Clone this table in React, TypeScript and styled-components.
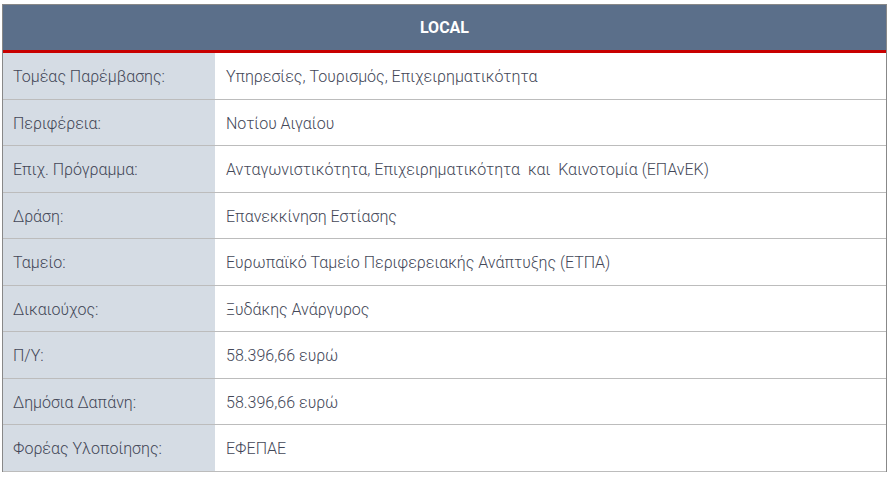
import React from 'react';
import styled, {createGlobalStyle} from "styled-components";

type RowType = {
    label: string;
    value: string;
}

const rows: RowType[] = [
    {label: "Τομέας Παρέμβασης:", value: "Υπηρεσίες, Τουρισμός, Επιχειρηματικότητα"},
    {label: "Περιφέρεια:", value: "Νοτίου Αιγαίου"},
    {label: "Επιχ. Πρόγραμμα:", value: "Ανταγωνιστικότητα, Επιχειρηματικότητα  και  Καινοτομία (ΕΠΑνΕΚ)"},
    {label: "Δράση:", value: "Επανεκκίνηση Εστίασης"},
    {label: "Ταμείο:", value: "Ευρωπαϊκό Ταμείο Περιφερειακής Ανάπτυξης (ΕΤΠΑ)"},
    {label: "Δικαιούχος:", value: "Ξυδάκης Ανάργυρος"},
    {label: "Π/Υ:", value: "58.396,66 ευρώ"},
    {label: "Δημόσια Δαπάνη:", value: "58.396,66 ευρώ"},
    {label: "Φορέας Υλοποίησης:", value: "ΕΦΕΠΑΕ"},
];

const GlobalStyle = createGlobalStyle`
  body {
    margin: 0;
    background: #fff;
    font-family: Roboto, "Liberation Sans", sans-serif;
  }
`

export default function App() {
    return (
        <>
            <GlobalStyle/>
            <Wrapper>
                <Table>
                    <colgroup>
                        <LabelCol/>
                        <col/>
                    </colgroup>
                    <thead>
                    <tr>
                        <Head colSpan={2}>LOCAL</Head>
                    </tr>
                    </thead>
                    <tbody>
                    {rows.map((r) => (
                        <tr key={r.label}>
                            <Label>{r.label}</Label>
                            <Value>{r.value}</Value>
                        </tr>
                    ))}
                    </tbody>
                </Table>
            </Wrapper>
        </>
    );
}

const Wrapper = styled.div`
  padding: 4px 0 0 2px;
  width: 885px;
`

const Table = styled.table`
  width: 885px;
  border-collapse: separate;
  border-spacing: 0;
  border-top: 1px solid #888;
  border-left: 1px solid #888;
  border-right: 1px solid #888;
  table-layout: fixed;
`

const LabelCol = styled.col`
  width: 212px;
`

const Head = styled.th`
  height: 45px;
  padding: 0;
  background: #5b6f8a;
  color: #fff;
  font-size: 16px;
  font-weight: 700;
  text-align: center;
  border-bottom: 3px solid #c80000;
`

const Cell = styled.td`
  padding: 11px 10px 9px;
  font-size: 16px;
  line-height: 25.5px;
  font-weight: 300;
  color: #434757;
  border-bottom: 1px solid #bcbcbc;
  text-align: left;
  white-space: pre;
`

const Label = styled(Cell)`
  background: #d5dce4;
`

const Value = styled(Cell)`
  padding-left: 11px;
  background: #fff;
`
